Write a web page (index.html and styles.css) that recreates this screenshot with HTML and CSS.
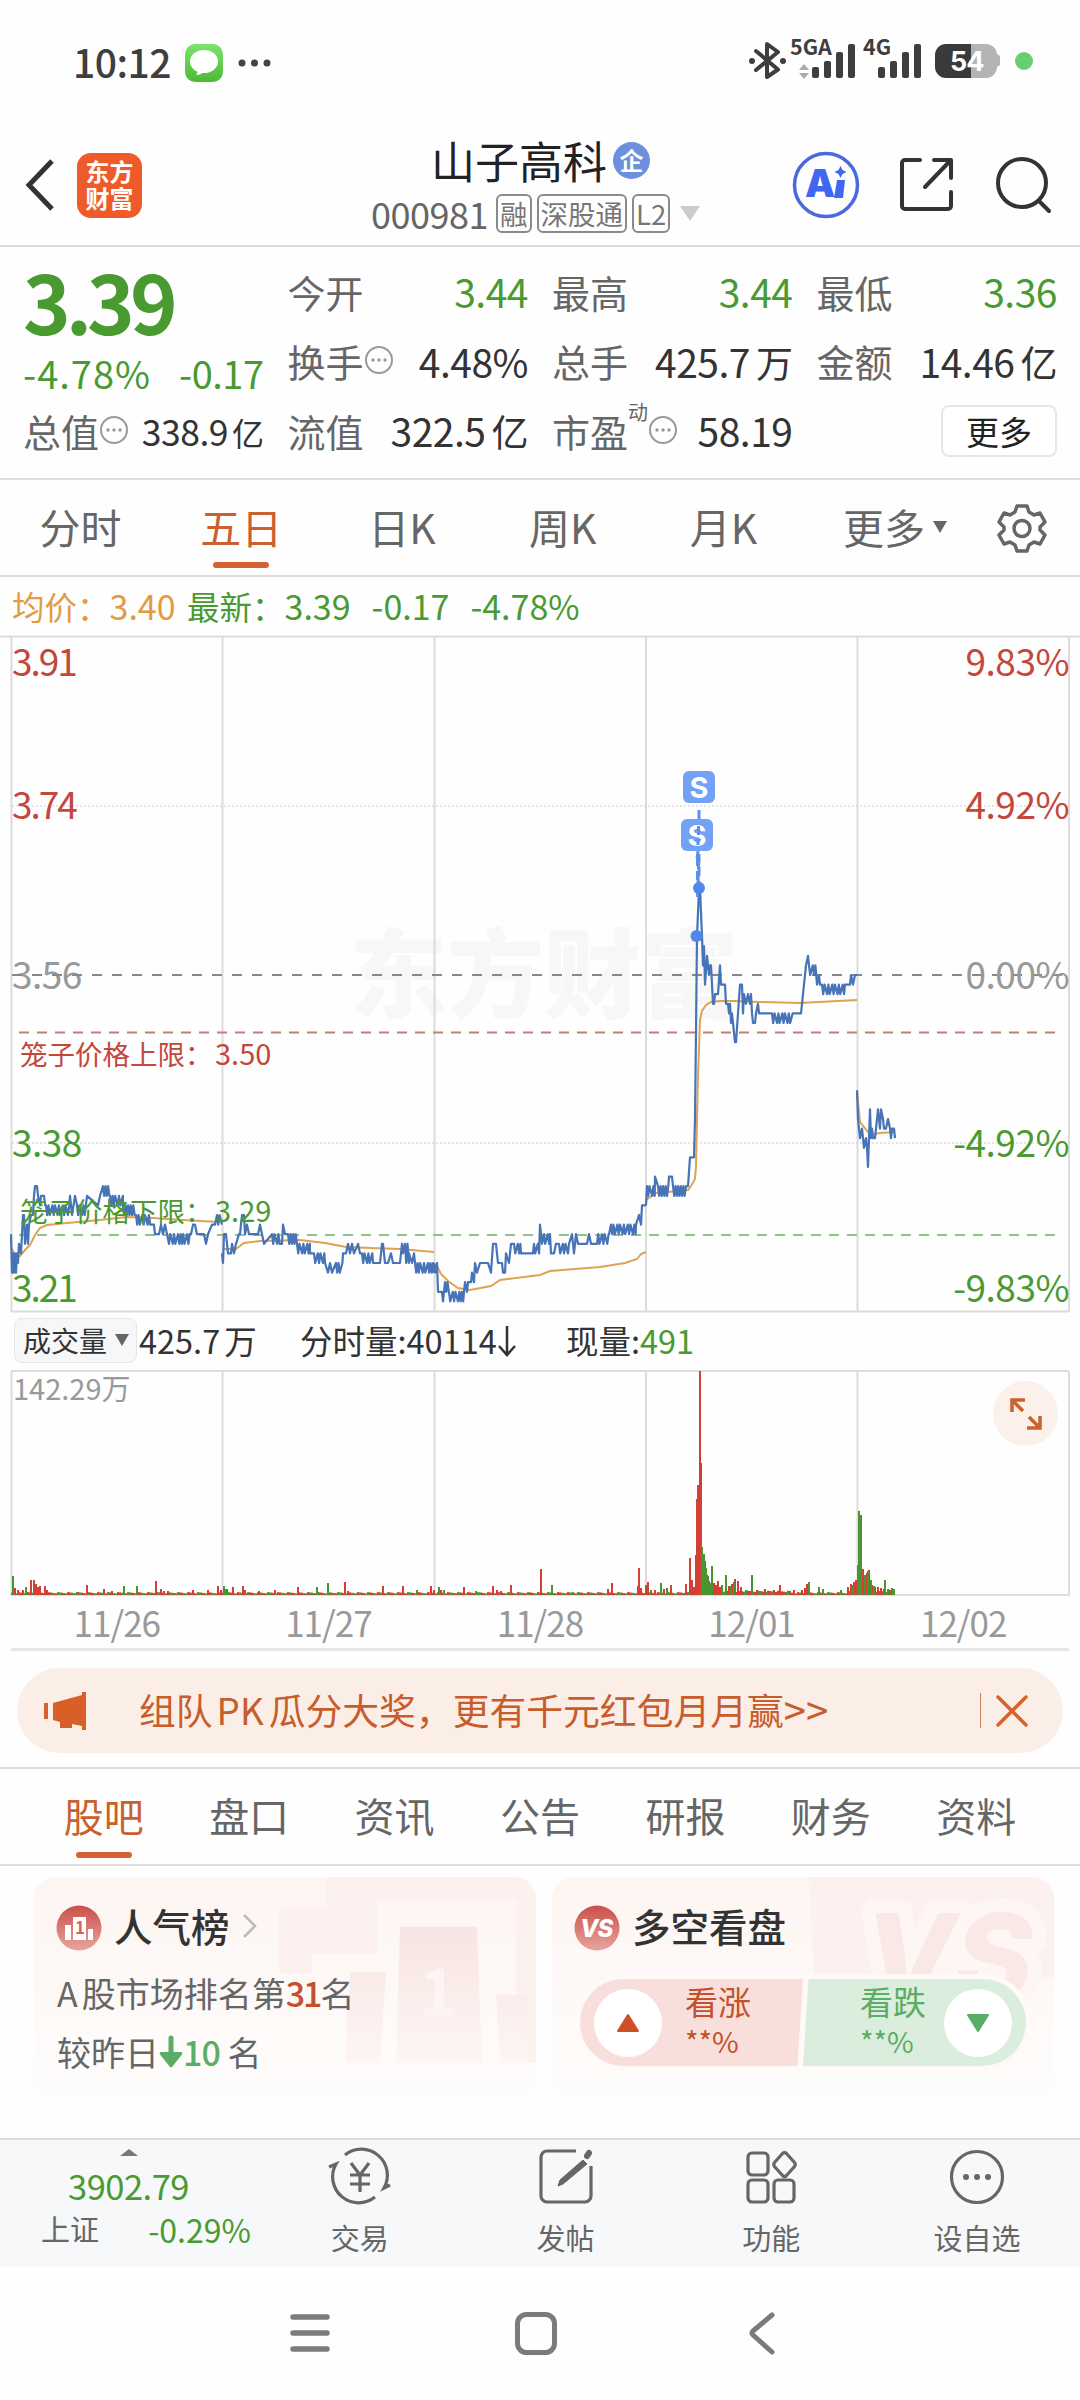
FILE: index.html
```html
<!DOCTYPE html>
<html lang="zh-CN">
<head>
    <meta charset="UTF-8">
    <meta name="viewport" content="width=device-width, initial-scale=1.0">
    <title>山子高科 000981</title>
    <link rel="stylesheet" href="styles.css">
</head>
<body>
    <div class="status-bar">
        <span class="clock">10:12</span>
        <svg class="msg-icon" width="38" height="38" viewBox="0 0 38 38">
            <defs>
                <linearGradient id="msgGreen" x1="0" y1="0" x2="0" y2="1"><stop offset="0" stop-color="#7ee26e"/><stop offset="1" stop-color="#4cba35"/></linearGradient>
            </defs>
            <rect width="38" height="38" rx="10" fill="url(#msgGreen)"/>
            <ellipse cx="19" cy="17.500" rx="14" ry="11.500" fill="#fff"/>
            <path d="M13 25c0 3-1 5-2 6 4 0 7-2 8-4z" fill="#fff"/>
        </svg>
        <svg class="dots-icon" width="34" height="8" viewBox="0 0 34 8" fill="#444"><circle cx="4" cy="4" r="3.500"/><circle cx="16.500" cy="4" r="3.500"/><circle cx="29" cy="4" r="3.500"/></svg>
        <svg class="signal" width="290" height="50" viewBox="0 0 290 50">
            <g fill="none" stroke="#3e3e3e" stroke-width="4" stroke-linejoin="round" stroke-linecap="round">
                <path d="M8 13L30 31.500L19 39V6L30 14L8 32"/>
            </g>
            <g fill="#3e3e3e"><circle cx="4" cy="23" r="3"/><circle cx="35" cy="23" r="3"/></g>
            <text class="net" x="42" y="17">5GA</text>
            <path d="M56 26l5 6h-10zM56 41l5-6h-10z" fill="#aaa"/>
            <g fill="#3e3e3e">
                <rect x="64" y="29" width="7" height="11" rx="2"/><rect x="76" y="23" width="7" height="17" rx="2"/><rect x="88" y="14" width="7" height="26" rx="2"/><rect x="100" y="6" width="7" height="34" rx="2"/>
                <rect x="130" y="29" width="7" height="11" rx="2"/><rect x="142" y="23" width="7" height="17" rx="2"/><rect x="154" y="14" width="7" height="26" rx="2"/><rect x="166" y="6" width="7" height="34" rx="2"/>
            </g>
            <text class="net" x="115" y="17">4G</text>
            <path d="M223 6h15a11 11 0 0 1 11 10l3 2v9l-3 2a11 11 0 0 1-11 11h-15z" fill="#b4b4b4"/>
            <path d="M198 6h25v34h-25a11 11 0 0 1-11-11V17a11 11 0 0 1 11-11z" fill="#3a3a3a"/>
            <text class="battery" x="202" y="33">54</text>
            <circle cx="276" cy="23" r="9" fill="#67cf72"/>
        </svg>
    </div>

    <header class="header">
        <svg class="back" width="30" height="54" viewBox="0 0 30 54" fill="none" stroke="#333" stroke-width="5"><path d="M27 3L4 27L27 51"/></svg>
        <div class="logo"><span>东方</span><span>财富</span></div>
        <div class="stock">
            <div class="stock-name">山子高科<span class="badge">企</span></div>
            <div class="stock-code">
                <span class="code">000981</span>
                <span class="tag">融</span><span class="tag">深股通</span><span class="tag">L2</span>
                <i class="arrow-code"></i>
            </div>
        </div>
        <div class="header-icons">
            <svg width="68" height="68" viewBox="0 0 68 68">
                <circle cx="34" cy="34" r="31.500" fill="none" stroke="#4a69dc" stroke-width="3.500"/>
                <text class="ai" x="13" y="46">A</text>
                <path d="M45 29h8l-2 18h-9z" fill="#3f67f2"/>
                <path d="M48.500 15l2 4 4 2-4 2-2 4-2-4-4-2 4-2z" fill="#3f67f2"/>
            </svg>
            <svg width="56" height="56" viewBox="0 0 56 56" fill="none" stroke="#333" stroke-width="4" stroke-linecap="round" stroke-linejoin="round">
                <path d="M21 3H6a3 3 0 0 0-3 3v43a3 3 0 0 0 3 3h43a3 3 0 0 0 3-3V35"/>
                <path d="M35 3H52V21M51 4L26 30"/>
            </svg>
            <svg width="58" height="58" viewBox="0 0 58 58" fill="none" stroke="#333" stroke-width="4" stroke-linecap="round">
                <circle cx="28" cy="27" r="24"/><path d="M45 45l10 10"/>
            </svg>
        </div>
    </header>

    <section class="quote">
        <div class="quote-col">
            <div class="price">3.39</div>
            <div class="change green"><span class="pct">-4.78%</span><span>-0.17</span></div>
            <div class="item small"><label>总值</label><svg class="info" viewBox="0 0 30 30"><use href="#info"/></svg><b>338.9<em>亿</em></b></div>
        </div>
        <div class="quote-col">
            <div class="item green"><label>今开</label><b>3.44</b></div>
            <div class="item"><label>换手</label><svg class="info" viewBox="0 0 30 30"><use href="#info"/></svg><b>4.48%</b></div>
            <div class="item"><label>流值</label><b>322.5<em>亿</em></b></div>
        </div>
        <div class="quote-col">
            <div class="item green"><label>最高</label><b>3.44</b></div>
            <div class="item"><label>总手</label><b>425.7<em>万</em></b></div>
            <div class="item pe"><label>市盈</label><sup>动</sup><svg class="info" viewBox="0 0 30 30"><use href="#info"/></svg><b>58.19</b></div>
        </div>
        <div class="quote-col">
            <div class="item green"><label>最低</label><b>3.36</b></div>
            <div class="item"><label>金额</label><b>14.46<em>亿</em></b></div>
            <div class="item"><button class="more">更多</button></div>
        </div>
    </section>

    <nav class="period">
        <span>分时</span>
        <span class="active">五日</span>
        <span>日K</span>
        <span>周K</span>
        <span>月K</span>
        <span class="period-more">更多<i class="arrow-down"></i></span>
        <svg width="50" height="50" viewBox="0 0 50 50" fill="none" stroke="#666" stroke-width="3.500" stroke-linejoin="round">
            <path d="M20 3h10l2 6 5 3 6-2 5 9-5 5v3l5 5-5 9-6-2-5 3-2 6H20l-2-6-5-3-6 2-5-9 5-5v-3l-5-5 5-9 6 2 5-3z"/>
            <circle cx="25" cy="25.500" r="8"/>
        </svg>
    </nav>

    <div class="latest">
        <span class="orange">均价：<b>3.40</b></span>
        <span class="green">最新：<b>3.39</b></span>
        <b class="green">-0.17</b>
        <b class="green">-4.78%</b>
    </div>

    <svg class="chart" width="1080" height="677" viewBox="0 0 1080 677">
        <text class="watermark" x="350" y="374">东方财富</text>
        <g class="grid-line">
            <path d="M0 .5H1080M11 675.500H1069" />
            <path d="M11.500 1V676M222.500 1V676M434.500 1V676M646 1V676M857.500 1V676M1069 1V676"/>
        </g>
        <path class="dotted" d="M12 170H1069M12 507H1069"/>
        <g class="axis">
            <text x="12" y="40" class="up tight">3.91</text>
            <text x="12" y="183" class="up tight">3.74</text>
            <text x="12" y="353" class="flat">3.56</text>
            <text x="12" y="521" class="down">3.38</text>
            <text x="12" y="666" class="down tight">3.21</text>
        </g>
        <path class="dash-flat" d="M12 339H1062"/>
        <path class="dash-up" d="M19 396.500H1058"/>
        <path class="dash-down" d="M19 599H1058"/>
        <path class="avg" d="M11 612L15 618L20 620L25 614L30 609L35 599L40 592L47 589L67 587L100 584L127 581L153 582L167 583L200 585L220 586M223 613H236L244 607L260 605L300 604L325 607L346 611L370 612L400 613L434 616M436 628L441 638L448 645L458 652L470 654L491 650L500 644L540 639L550 635L600 631L625 627L637 623L641 618L646 616M646 564L656 557L668 556L688 554L691 550L695 543L696 530L698 440L700 384L702 375L706 369L711 366L720 365L735 365L760 366L800 367L857 364M857 455L860 486L868 496L874 498L880 497L895 496"/>
        <path class="price-line" id="priceLine"/>
        <g class="marks">
            <path d="M699 174V209M697 222L699 209M697.500 221V262L699 218V248" stroke-dasharray="9 5"/>
            <circle cx="699" cy="252" r="6"/>
            <circle cx="696.500" cy="300" r="6"/>
            <rect x="683" y="135" width="32" height="32" rx="6"/>
            <rect x="681" y="183" width="32" height="32" rx="6"/>
            <text x="699" y="162">S</text>
            <text x="697" y="210">S</text>
            <path d="M698.500 190v9M698 203v6"/>
        </g>
        <g class="axis right">
            <text x="1069" y="40" class="up">9.83%</text>
            <text x="1069" y="183" class="up">4.92%</text>
            <text x="1069" y="353" class="flat">0.00%</text>
            <text x="1069" y="521" class="down">-4.92%</text>
            <text x="1069" y="666" class="down">-9.83%</text>
        </g>
        <text class="cage up" x="20" y="429">笼子价格上限：<tspan x="215">3.50</tspan></text>
        <text class="cage down" x="20" y="586">笼子价格下限：<tspan x="215">3.29</tspan></text>
    </svg>

    <div class="volume-head">
        <span class="chip">成交量<i class="arrow-down"></i></span>
        <span class="total">425.7<em>万</em></span>
        <span class="minute">分时量:40114<svg width="20" height="32" viewBox="0 0 20 32" fill="none" stroke="#333" stroke-width="2.500"><path d="M10 1V29M2 21l8 9 8-9"/></svg></span>
        <span class="now">现量:<b class="green">491</b></span>
    </div>

    <div class="volume">
        <svg width="1080" height="227" viewBox="0 0 1080 227">
            <path class="grid-line" d="M11 1H1069M11 225H1069M11.500 1V226M222.500 1V226M434.500 1V226M646 1V226M857.500 1V226M1069 1V226"/>
            <g id="volumeBars"></g>
            <text class="vol-max" x="13" y="30">142.29万</text>
        </svg>
        <div class="expand">
            <svg width="34" height="34" viewBox="0 0 34 34" fill="none" stroke="#c8632f" stroke-width="3.500"><path d="M3 15V3H16M4 4L14 14M31 19V31H18M30 30L20 20"/></svg>
        </div>
    </div>
    <div class="dates">
        <span>11/26</span><span>11/27</span><span>11/28</span><span>12/01</span><span>12/02</span>
    </div>

    <div class="banner">
        <svg width="44" height="40" viewBox="0 0 44 40" fill="#d95f28"><rect x="0" y="12" width="4" height="16"/><path d="M9 12L38 4V1h4v38h-4v-4l-10-2v4H16v-6l-7-2z"/></svg>
        <span class="banner-text">组队<em>PK</em>瓜分大奖，更有千元红包月月赢<b>&gt;&gt;</b></span>
        <i class="divider"></i>
        <svg width="34" height="34" viewBox="0 0 34 34" fill="none" stroke="#d9622b" stroke-width="3.500" stroke-linecap="round"><path d="M3 3L31 31M31 3L3 31"/></svg>
    </div>

    <nav class="sections">
        <span class="active">股吧</span><span>盘口</span><span>资讯</span><span>公告</span><span>研报</span><span>财务</span><span>资料</span>
    </nav>

    <div class="cards">
        <div class="card">
            <svg class="card-bg" width="502" height="226" viewBox="0 0 502 226">
                <defs>
                    <linearGradient id="fade" x1="0" y1="0" x2="0" y2="1"><stop offset="0" stop-color="#f8e4e2"/><stop offset="1" stop-color="#fdf6f4"/></linearGradient>
                </defs>
                <path d="M245 30h47V0h210v186h-20V22H343v56h-65v18h-33z" fill="#fcf1ef"/>
                <path d="M366 50h77l5 136h-86zM316 95h36l-6 91h-35zM462 118h31v68h-27z" fill="url(#fade)"/>
                <text class="bg-one" x="385" y="139">1</text>
            </svg>
            <div class="card-title">
                <svg width="46" height="46" viewBox="0 0 46 46">
                    <defs><linearGradient id="redBall" x1="0" y1="0" x2="0" y2="1"><stop offset="0" stop-color="#c9504a"/><stop offset="1" stop-color="#e9a49e"/></linearGradient></defs>
                    <circle cx="23" cy="23" r="22.500" fill="url(#redBall)"/>
                    <path d="M9 20h6v15H9zM17 12h13v23H17zM32 24h5v11h-5z" fill="#fff"/>
                    <text class="one" x="19" y="29">1</text>
                </svg>
                <span>人气榜</span>
                <svg class="chevron" width="14" height="24" viewBox="0 0 14 24" fill="none" stroke="#bbb" stroke-width="2.500"><path d="M1 1L12 12L1 23"/></svg>
            </div>
            <p><em>A</em>股市场排名第<b class="rank">31</b>名</p>
            <p>较昨日<svg width="24" height="32" viewBox="0 0 24 32" fill="#5aad64"><path d="M9.500 2a2.500 2.500 0 0 1 5 0v14H22a1.500 1.500 0 0 1 1 2.500L13 31a1.500 1.500 0 0 1-2 0L1 18.500A1.500 1.500 0 0 1 2 16h7.500z"/></svg><b class="drop">10</b> 名</p>
        </div>
        <div class="card">
            <svg class="card-bg" width="502" height="226" viewBox="0 0 502 226">
                <path d="M257 0H502V100H262z" fill="#fcf1ef"/>
                <text class="bg-vs" x="312" y="122">VS</text>
            </svg>
            <div class="card-title">
                <svg width="46" height="46" viewBox="0 0 46 46"><circle cx="23" cy="23" r="22.500" fill="url(#redBall)"/><text class="vs" x="6" y="32">VS</text></svg>
                <span>多空看盘</span>
            </div>
            <div class="vote">
                <div class="vote-up">
                    <span class="ball"><svg width="24" height="20" viewBox="0 0 24 20"><path d="M12 2L22 18H2z" fill="#cf4f28" stroke="#cf4f28" stroke-width="2" stroke-linejoin="round"/></svg></span>
                    <span class="vote-text">看涨<small>**%</small></span>
                </div>
                <div class="vote-down">
                    <span class="vote-text">看跌<small>**%</small></span>
                    <span class="ball"><svg width="24" height="20" viewBox="0 0 24 20"><path d="M12 18L22 2H2z" fill="#5aad64" stroke="#5aad64" stroke-width="2" stroke-linejoin="round"/></svg></span>
                </div>
            </div>
        </div>
    </div>

    <footer class="toolbar">
        <div class="index">
            <i class="arrow-up"></i>
            <div class="index-value">3902.79</div>
            <div class="index-row"><span>上证</span><b>-0.29%</b></div>
        </div>
        <div class="tool">
            <svg width="62" height="58" viewBox="0 0 62 58" fill="none" stroke="#666" stroke-width="3.200">
                <path d="M16 8A26 26 0 0 1 55 41L61 38M46 50A26 26 0 0 1 7 17L0 20"/>
                <path d="M22 16l9 12 9-12M21 28h20M21 37h20M31 28v17"/>
            </svg>
            交易
        </div>
        <div class="tool">
            <svg width="56" height="58" viewBox="0 0 56 58" fill="none" stroke="#666" stroke-width="3.200">
                <path d="M38 4H9a6 6 0 0 0-6 6v39a6 6 0 0 0 6 6h38a6 6 0 0 0 6-6V19"/>
                <path d="M45 13l4 4L25 37l-5 2 2-6z" fill="#666" stroke-width="1"/>
                <path d="M49 9l2-3" stroke-width="6" stroke-linecap="round"/>
            </svg>
            发帖
        </div>
        <div class="tool">
            <svg width="56" height="58" viewBox="0 0 56 58" fill="none" stroke="#666" stroke-width="3.200">
                <rect x="5" y="6" width="20" height="22" rx="4"/><rect x="5" y="33" width="20" height="22" rx="4"/><rect x="31" y="33" width="20" height="22" rx="4"/>
                <path d="M39.500 6.500q2-2 4 0l8 9q1.500 2 0 4l-8 9q-2 2-4 0l-8-9q-1.500-2 0-4z"/>
            </svg>
            功能
        </div>
        <div class="tool">
            <svg width="56" height="58" viewBox="0 0 56 58" fill="none" stroke="#666" stroke-width="3.200">
                <circle cx="28" cy="30" r="25.500"/>
                <g fill="#666" stroke="none"><circle cx="17" cy="30" r="3"/><circle cx="28" cy="30" r="3"/><circle cx="39" cy="30" r="3"/></g>
            </svg>
            设自选
        </div>
    </footer>

    <div class="system-nav">
        <svg width="40" height="44" viewBox="0 0 40 44" stroke="#7b7b7b" stroke-width="5.500" stroke-linecap="round"><path d="M3 5H37M3 21H37M3 37H37"/></svg>
        <svg width="42" height="44" viewBox="0 0 42 44" fill="none" stroke="#7b7b7b" stroke-width="5"><rect x="2.500" y="2.500" width="37" height="38" rx="9"/></svg>
        <svg width="28" height="46" viewBox="0 0 28 46" fill="none" stroke="#7b7b7b" stroke-width="5" stroke-linecap="round" stroke-linejoin="round"><path d="M24 4L5 20q-2 2 0 4L24 41"/></svg>
    </div>

    <svg width="0" height="0" class="defs">
        <symbol id="info" viewBox="0 0 30 30">
            <circle cx="15" cy="15" r="13" fill="none" stroke="#999" stroke-width="2"/>
            <g fill="#999"><circle cx="9" cy="15" r="1.700"/><circle cx="15" cy="15" r="1.700"/><circle cx="21" cy="15" r="1.700"/></g>
        </symbol>
    </svg>

    <script src="chart.js"></script>
</body>
</html>
```

FILE: styles.css
```css
* {
    box-sizing: border-box;
}
body {
    margin: 0;
    width: 1080px;
    height: 2400px;
    background: #fefefe;
    color: #333;
    font-family: "Noto Sans CJK SC", sans-serif;
    font-size: 38px;
    line-height: 1;
    overflow: hidden;
}
svg {
    display: block;
    flex: none;
    overflow: visible;
}
b, em, i {
    font-weight: 400;
    font-style: normal;
}
.defs {
    position: absolute;
}
.green {
    color: #4a9a32;
}
.orange {
    color: #e29b43;
}

/* status bar */
.status-bar {
    display: flex;
    align-items: center;
    height: 125px;
    padding: 0 22px 0 73px;
}
.clock {
    width: 112px;
    padding-bottom: 2px;
    font-size: 39px;
    font-weight: 500;
    color: #3e3e3e;
    letter-spacing: -0.500px;
}
.dots-icon {
    margin-left: 15px;
}
.signal {
    margin-left: auto;
    margin-right: 20px;
}
.net {
    font-size: 21.500px;
    font-weight: 700;
    fill: #3e3e3e;
}
.battery {
    font-family: Inter, sans-serif;
    font-size: 27px;
    font-weight: 700;
    fill: #fff;
    letter-spacing: -1px;
}

/* header */
.header {
    display: flex;
    align-items: center;
    height: 122px;
    padding: 0 28px 0 25px;
    border-bottom: 2px solid #dcdcdc;
}
.logo {
    display: flex;
    flex-direction: column;
    align-items: center;
    justify-content: center;
    width: 65px;
    height: 65px;
    margin-left: 22px;
    padding-bottom: 2px;
    border-radius: 14px;
    background: #ef5a2a;
    color: #fff;
    font-size: 24px;
    font-weight: 700;
    line-height: 27px;
}
.stock {
    width: 350px;
    margin-left: 225px;
    padding-bottom: 2px;
}
.stock-name {
    display: flex;
    align-items: center;
    padding-left: 64px;
    height: 54px;
    font-size: 44px;
    color: #222;
}
.badge {
    width: 37px;
    height: 37px;
    margin-left: 6px;
    border-radius: 50%;
    background: #6d90dc;
    color: #fff;
    font-size: 24px;
    font-weight: 700;
    line-height: 35px;
    text-align: center;
}
.stock-code {
    display: flex;
    align-items: center;
    height: 44px;
    margin-top: 4px;
    gap: 5px;
    padding-left: 4px;
    color: #666;
    font-size: 36px;
}
.code {
    width: 120px;
    letter-spacing: -0.500px;
}
.tag {
    height: 39px;
    padding: 0 2px;
    border: 2px solid #8a8a8a;
    border-radius: 6px;
    color: #777;
    font-size: 27.500px;
    line-height: 34px;
}
.arrow-code {
    margin-left: 5px;
    border: 10px solid transparent;
    border-top: 15px solid #ccc;
    border-bottom: 0;
}
.header-icons {
    display: flex;
    align-items: center;
    gap: 39px;
    margin-left: auto;
}
.ai {
    font-family: Inter, sans-serif;
    font-size: 38px;
    font-weight: 900;
    fill: #3f67f2;
}

/* quote */
.quote {
    display: flex;
    gap: 24px;
    height: 233px;
    padding: 10px 23px 0 23px;
    border-bottom: 2px solid #dcdcdc;
}
.quote-col {
    flex: 1;
}
.price {
    height: 84px;
    font-size: 81px;
    font-weight: 700;
    line-height: 86px;
    letter-spacing: -5px;
    color: #4a9a32;
}
.change {
    display: flex;
    justify-content: space-between;
    height: 55px;
    line-height: 63px;
    letter-spacing: -0.500px;
}
.pct {
    letter-spacing: 1px;
}
.item {
    display: flex;
    align-items: center;
    height: 69.500px;
}
.item label {
    color: #666;
}
.item b {
    margin-left: auto;
    font-size: 39px;
    letter-spacing: -0.500px;
}
.item em {
    font-size: 37px;
    margin-left: 6px;
}
.small b {
    font-size: 35.500px;
    letter-spacing: -0.500px;
}
.small em {
    font-size: 32px;
    margin-left: 4px;
}
.item sup {
    align-self: flex-start;
    margin-top: 6px;
    font-size: 20px;
    line-height: 20px;
    color: #666;
}
.info {
    width: 30px;
    height: 30px;
    margin-top: -2px;
}
.more {
    width: 116px;
    height: 52px;
    margin-left: auto;
    padding: 0 0 3px;
    border: 2px solid #e6e6e6;
    border-radius: 8px;
    background: #fff;
    color: #222;
    font-family: inherit;
    font-size: 33px;
}

/* tabs */
.period {
    display: flex;
    align-items: center;
    height: 97px;
    border-bottom: 2px solid #dcdcdc;
    font-size: 41px;
    color: #666;
}
.period span {
    position: relative;
    width: 160.800px;
    padding-bottom: 2px;
    text-align: center;
}
.period .period-more {
    display: flex;
    align-items: center;
    justify-content: flex-end;
    gap: 8px;
    width: 143px;
    margin-right: 50px;
}
.active {
    color: #cb602f;
}
.period .active::after,
.sections .active::after {
    content: "";
    position: absolute;
    left: 50%;
    bottom: -19px;
    width: 56px;
    height: 6px;
    margin-left: -28px;
    border-radius: 3px;
    background: #d4622f;
}
.arrow-down {
    border: 7px solid transparent;
    border-top: 12px solid #666;
    border-bottom: 0;
}
.latest {
    display: flex;
    align-items: center;
    height: 59px;
    padding: 0 0 1px 12px;
    font-size: 32.500px;
}
.latest .orange {
    width: 175px;
}
.latest > b {
    margin-left: 21px;
}
.latest b {
    font-size: 34px;
}

/* price chart */
.grid-line {
    fill: none;
    stroke: #dcdcdc;
    stroke-width: 2;
}
.dotted {
    stroke: #ccc;
    stroke-width: 1;
    stroke-dasharray: 2 2;
}
.watermark {
    font-size: 97px;
    font-weight: 900;
    fill: #f7f7f7;
}
.axis {
    font-size: 37px;
    letter-spacing: -0.500px;
}
.axis .tight {
    letter-spacing: -2px;
}
.right {
    text-anchor: end;
}
.up {
    fill: #c4473c;
}
.down {
    fill: #4a9a32;
}
.flat {
    fill: #999;
}
.dash-flat {
    stroke: #888;
    stroke-width: 2;
    stroke-dasharray: 10 10;
}
.dash-up {
    stroke: #c97b75;
    stroke-width: 2;
    stroke-dasharray: 10 8;
}
.dash-down {
    stroke: #91c28a;
    stroke-width: 2;
    stroke-dasharray: 10 8;
}
.cage {
    font-size: 27.500px;
}
.cage tspan {
    font-size: 29px;
}
.avg {
    fill: none;
    stroke: #dfa252;
    stroke-width: 2;
}
.price-line {
    fill: none;
    stroke: #4674b6;
    stroke-width: 2.200;
    stroke-linejoin: round;
}
.marks path {
    fill: none;
    stroke: #5d90ea;
    stroke-width: 3;
}
.marks circle {
    fill: #4f87ef;
}
.marks rect {
    fill: #72a1f5;
}
.marks text {
    font-family: Inter, sans-serif;
    font-size: 29px;
    font-weight: 700;
    fill: #fff;
    text-anchor: middle;
}

/* volume */
.volume-head {
    display: flex;
    align-items: center;
    height: 57px;
    padding: 0 0 2px 14px;
    font-size: 32.500px;
}
.volume-head span {
    display: flex;
    align-items: center;
}
.volume-head em {
    margin-left: 4px;
}
.volume-head .chip {
    gap: 8px;
    width: 123px;
    height: 45px;
    padding: 0 0 2px 8px;
    border: 1px solid #e4e6ea;
    border-radius: 8px;
    background: #f6f7f9;
    font-size: 28px;
}
.total {
    width: 161px;
    margin-left: 2px;
}
.minute {
    width: 266px;
}
.volume {
    position: relative;
    height: 227px;
}
.vol-max {
    font-size: 29px;
    fill: #999;
}
.expand {
    display: flex;
    align-items: center;
    justify-content: center;
    position: absolute;
    left: 993px;
    top: 11px;
    width: 65px;
    height: 65px;
    border-radius: 50%;
    background: #fbf0ea;
}
.dates {
    display: flex;
    height: 54px;
    margin: 0 11px;
    border-bottom: 3px solid #e6e6e6;
    color: #999;
    font-size: 35px;
    line-height: 50px;
    letter-spacing: -1px;
    text-align: center;
}
.dates span {
    flex: 1;
}

/* banner */
.banner {
    display: flex;
    align-items: center;
    height: 85px;
    margin: 17px 17px 14px;
    padding: 0 34px 0 27px;
    border-radius: 43px;
    background: #fbeee7;
    color: #c75d2c;
    font-size: 36.800px;
}
.banner-text {
    display: flex;
    align-items: center;
    margin-left: 51px;
    padding-bottom: 3px;
}
.banner-text em {
    margin: 0 5px 0 4px;
}
.banner-text b {
    font-size: 40px;
}
.divider {
    width: 1px;
    height: 35px;
    margin-left: auto;
    margin-right: 14px;
    background: #cf8058;
}
.sections {
    display: flex;
    align-items: center;
    height: 99px;
    padding: 0 31px;
    border-top: 2px solid #dcdcdc;
    border-bottom: 2px solid #dcdcdc;
    color: #666;
    font-size: 40px;
}
.sections span {
    position: relative;
    flex: 1;
    padding-bottom: 4px;
    text-align: center;
}
.sections .active {
    color: #cb602f;
}

/* cards */
.cards {
    display: flex;
    gap: 16px;
    height: 272px;
    padding: 11px 26px 35px 34px;
}
.card {
    position: relative;
    width: 502px;
    border-radius: 22px;
    background: linear-gradient(#fdf5f2, #fefdfc);
    color: #666;
    font-size: 34px;
    overflow: hidden;
}
.card-bg {
    position: absolute;
    left: 0;
    top: 0;
}
.bg-one {
    font-size: 64px;
    font-weight: 700;
    fill: #fdf5f3;
}
.bg-vs {
    font-family: Inter, sans-serif;
    font-size: 118px;
    font-weight: 800;
    font-style: italic;
    fill: #f9e8e6;
    stroke: #fdf6f4;
    stroke-width: 28px;
    stroke-linejoin: round;
    paint-order: stroke;
}
.card-title {
    display: flex;
    align-items: center;
    position: relative;
    gap: 12px;
    height: 46px;
    margin: 28px 0 0 22px;
    color: #333;
    font-size: 38.500px;
    font-weight: 500;
}
.card-title span {
    padding-bottom: 5px;
}
.chevron {
    margin-left: 1px;
    margin-top: -4px;
}
.one {
    font-size: 17px;
    font-weight: 700;
    fill: #cf6660;
}
.vs {
    font-family: Inter, sans-serif;
    font-size: 24px;
    font-weight: 800;
    font-style: italic;
    fill: #fff;
    letter-spacing: -1px;
}
.card p {
    display: flex;
    align-items: center;
    position: relative;
    height: 34px;
    margin: 25px 0 0 23px;
    white-space: pre;
}
.card p em {
    margin-right: 4px;
}
.rank {
    color: #c3512b;
    font-weight: 500;
    letter-spacing: -2px;
}
.drop {
    color: #5aad64;
    font-weight: 500;
    letter-spacing: -1px;
}
.vote {
    display: flex;
    position: relative;
    width: 456px;
    height: 97px;
    margin: 23px 0 0 23px;
    border: 5px solid #fffaf8;
    border-radius: 49px;
    background: #fffaf8;
    overflow: hidden;
}
.vote > div {
    display: flex;
    align-items: center;
}
.vote-up {
    width: 223px;
    padding-left: 14px;
    background: #f8dfdb;
    color: #c3512b;
    clip-path: polygon(0 0, 100% 0, 97.500% 100%, 0 100%);
}
.vote-down {
    width: 223px;
    padding-left: 57px;
    background: #dbeedd;
    color: #5aad64;
    clip-path: polygon(2.500% 0, 100% 0, 100% 100%, 0 100%);
}
.ball {
    display: flex;
    align-items: center;
    justify-content: center;
    width: 68px;
    height: 68px;
    border-radius: 50%;
    background: #fff;
}
.vote-text {
    display: flex;
    flex-direction: column;
    width: 84px;
    padding-bottom: 6px;
    font-size: 33px;
}
.vote-up .vote-text {
    margin-left: 23px;
}
.vote-text small {
    font-size: 29px;
    line-height: 30px;
    margin-top: 7px;
}

/* bottom */
.toolbar {
    display: flex;
    height: 129px;
    border-top: 2px solid #dcdcdc;
    background: #f7f8fa;
    color: #666;
    font-size: 29px;
}
.index {
    display: flex;
    flex-direction: column;
    align-items: center;
    width: 257px;
    padding-top: 9px;
}
.arrow-up {
    border: 9px solid transparent;
    border-bottom: 7px solid #777;
    border-top: 0;
}
.index-value {
    margin-top: 12px;
    color: #4a9a32;
    font-size: 34.500px;
    letter-spacing: -0.500px;
}
.index-row {
    display: flex;
    align-items: center;
    gap: 49px;
    margin-top: 10px;
    padding-left: 35px;
}
.index-row b {
    color: #4a9a32;
    font-size: 32px;
}
.tool {
    display: flex;
    flex-direction: column;
    align-items: center;
    width: 205.700px;
    padding-top: 7px;
    gap: 18px;
}
.system-nav {
    display: flex;
    align-items: center;
    height: 133px;
    padding-left: 290px;
}
.system-nav svg + svg {
    margin-left: 185px;
}
.system-nav svg:last-child {
    margin-left: 191px;
}
```

FILE: chart.js
```javascript
// x position, price in cents; a third value means "jitter down to that price until x of the next entry"
const DAYS = [
    [[11,329],[12,325],[13,327],[14,325],[15,327],[16,325],[17,327],[18,326],[19,328],[21,327],[22,329],[23,331],[24,331],[25,328],[27,330],[28,328],[29,330],[31,331],[33,331],[34,333],[35,334],[37,334],[38,333],[40,332],[41,333],[44,333,332],[46,332,331],[70,333],[72,331],[75,333],[77,332,331],[87,333],[98,332],[100,333],[103,334,333],[110,333,332],[123,332,331],[136,331,330],[151,330],[154,330],[155,329],[159,329],[161,330],[163,329],[165,330],[167,329],[169,328,329],[191,329],[193,330],[195,330],[197,329],[204,329],[206,328],[208,329],[212,330],[215,330],[217,331,330],[222,330]],
    [[222,327],[223,326],[224,329],[226,329],[228,327],[231,327],[232,328],[234,327],[236,328],[239,329],[240,329],[242,331],[244,331],[245,329],[247,330],[249,329],[258,329],[260,330],[262,329],[264,328],[272,329,328],[282,328],[283,330],[285,329],[288,329,328],[297,328,327],[310,327],[314,327,326],[325,326],[328,325],[330,326],[332,325],[336,326,325],[343,327],[346,327],[348,328],[350,327],[352,328],[354,327],[358,328],[360,327],[362,327,326],[373,326],[380,326],[382,328],[383,328],[385,326],[388,326],[391,327],[393,326],[400,326],[402,328],[403,327],[405,328,326],[409,327],[412,326],[414,327],[415,326,325],[434,325]],
    [[434,326,325],[437,326],[438,323],[442,323],[443,322],[445,324,323],[449,323,322],[464,323],[465,324],[467,323],[468,324],[471,324],[472,325],[474,324],[475,326],[477,325],[480,326],[488,326],[491,325],[493,328],[496,328],[498,326],[502,326],[503,325],[505,325],[506,327],[509,326],[511,328],[514,328,327],[521,327],[533,327],[534,328,327],[540,330],[542,328],[544,329,328],[550,329],[551,327],[554,327],[556,328],[559,328,327],[569,328],[572,329],[574,327],[576,329],[578,328],[587,328],[589,329],[591,328],[597,328,329],[609,329],[611,330,329],[636,330],[639,331],[641,330],[642,332],[646,332]],
    [[646,332],[647,334,333],[655,335],[658,334,333],[669,335],[672,335],[673,334,333],[686,334],[688,334],[690,337],[694,337],[695,341],[696,350],[697,360],[699,365],[700,365],[702,360],[703,357],[704,359],[705,355],[707,358],[709,356],[710,357],[711,357],[712,355],[713,353],[714,353],[715,354],[718,354],[720,357],[721,355],[725,355],[726,353],[728,353],[729,352],[730,353],[731,351],[732,352],[734,350],[735,349],[736,349],[738,352],[740,355],[742,355],[743,352],[744,354],[746,353],[748,354],[750,353],[751,354],[752,352],[753,351],[755,351],[756,352],[758,353],[759,352],[770,352],[772,352,351],[793,352],[801,352],[803,354],[806,357],[808,358],[809,357,356],[817,355],[819,356],[820,355],[822,355,354],[845,355],[850,355],[851,356],[853,355],[855,356],[857,356]],
    [[857,344],[858,341],[860,339],[862,340],[863,339],[864,338],[866,339],[867,338],[868,336],[869,339],[870,342],[871,339],[872,340],[873,339],[875,339],[877,341],[878,342],[880,340],[881,342],[883,341],[884,340],[886,340],[888,341],[890,340],[891,339],[892,340],[894,340],[895,339]]
];

const priceY = p => (339 + (356 - p) * 9.6).toFixed(1);

function dayPath(points) {
    let d = '';
    points.forEach(([x, p, low], i) => {
        d += `${i ? 'L' : 'M'}${x} ${priceY(p)}`;
        if (low === undefined) return;
        const end = points[i + 1][0];
        let down = true;
        for (let k = x + 1.2; k < end; k += (Math.round(k) % 5 === 0 ? 2.6 : 1.3)) {
            d += `L${k.toFixed(1)} ${priceY(down ? low : p)}`;
            down = !down;
        }
    });
    return d;
}
document.getElementById('priceLine').setAttribute('d', DAYS.map(dayPath).join(''));

const RED = '#d23f34';
const GREEN = '#4a9434';
const redBars = [[14,7],[17,5],[22,5],[30,15],[33,15],[35,11],[37,8],[39,9],[44,9],[46,5],[86,10],[103,6],[111,4],[155,14],[160,6],[163,4],[167,4],[192,5],[207,5],[217,9],[220,5],[226,6],[232,8],[242,9],[244,5],[258,4],[274,5],[297,8],[344,13],[347,4],[382,9],[402,9],[430,9],[433,5],[440,5],[463,8],[492,9],[496,5],[500,4],[510,10],[540,26],[607,6],[611,12],[637,9],[638,27],[640,7],[645,10],[647,13],[654,5],[663,6],[670,10],[685,11],[689,37],[691,15],[693,8],[695,40],[696,96],[697,110],[698,95],[699,224],[700,132],[702,30],[704,34],[706,20],[708,14],[713,12],[715,10],[717,14],[719,8],[728,9],[731,11],[734,16],[737,14],[740,8],[756,5],[764,6],[773,5],[779,10],[793,5],[801,5],[804,7],[806,11],[847,8],[850,11],[853,13],[855,15],[859,41],[862,26],[866,22],[868,25],[871,10],[874,8],[877,8],[880,7],[883,6],[889,5]];
const greenBars = [[12,19],[25,8],[76,3],[123,9],[136,9],[223,9],[225,6],[316,8],[327,12],[416,5],[438,8],[443,5],[475,4],[551,10],[572,3],[650,5],[660,12],[666,7],[701,48],[703,41],[705,27],[707,19],[709,12],[711,29],[721,10],[725,20],[730,9],[733,13],[745,5],[751,20],[808,13],[818,8],[822,6],[840,5],[852,10],[857,30],[858,84],[860,80],[864,20],[867,24],[870,15],[873,9],[884,15],[887,6],[891,7],[893,6]];

const bars = [];
for (let x = 11; x < 895; x += 2) {
    const busy = x > 700 && x < 790 || x > 845;
    bars.push([x, (x * 7 % 5) / 3 + (busy ? 3 : 1.6), x * 13 % 7 < 4 ? RED : GREEN]);
}
redBars.forEach(([x, h]) => bars.push([x, h, RED]));
greenBars.forEach(([x, h]) => bars.push([x, h, GREEN]));
document.getElementById('volumeBars').innerHTML = bars
    .map(([x, h, c]) => `<rect x="${x}" y="${(225 - h).toFixed(1)}" width="2" height="${h.toFixed(1)}" fill="${c}"/>`)
    .join('');
```
